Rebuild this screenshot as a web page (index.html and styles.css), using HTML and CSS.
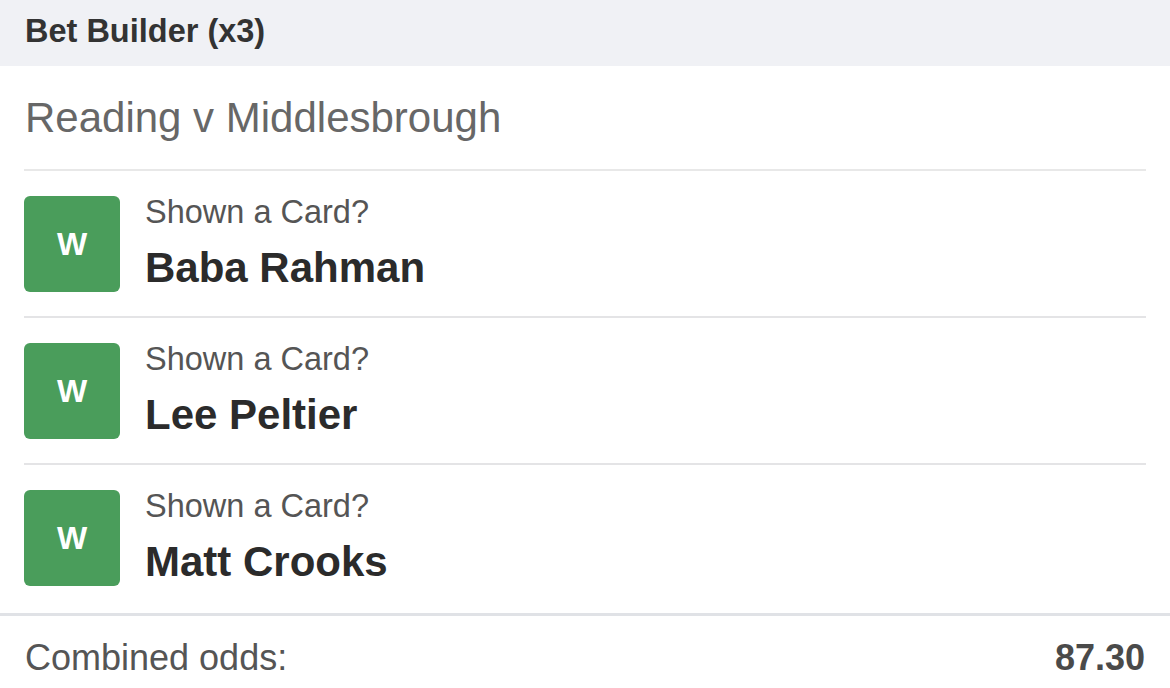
FILE: index.html
```html
<!DOCTYPE html>
<html>
<head>
<meta charset="utf-8">
<link rel="stylesheet" href="styles.css">
</head>
<body>
<div class="slip">
  <div class="header">Bet Builder (x3)</div>
  <div class="body">
    <div class="match">Reading v Middlesbrough</div>
    <div class="sel">
      <div class="badge">W</div>
      <div class="info">
        <div class="market">Shown a Card?</div>
        <div class="name">Baba Rahman</div>
      </div>
    </div>
    <div class="sel">
      <div class="badge">W</div>
      <div class="info">
        <div class="market">Shown a Card?</div>
        <div class="name">Lee Peltier</div>
      </div>
    </div>
    <div class="sel last">
      <div class="badge">W</div>
      <div class="info">
        <div class="market">Shown a Card?</div>
        <div class="name">Matt Crooks</div>
      </div>
    </div>
  </div>
  <div class="footer">
    <span class="label">Combined odds:</span>
    <span class="odds">87.30</span>
  </div>
</div>
</body>
</html>
```
FILE: styles.css
```css
html, body {
  margin: 0;
  padding: 0;
  background: #ffffff;
}
body {
  font-family: "Liberation Sans", Arial, sans-serif;
  width: 1170px;
  height: 688px;
  overflow: hidden;
}
.header {
  height: 66px;
  box-sizing: border-box;
  background: #f0f1f5;
  padding: 12px 25px 0;
  font-size: 32.5px;
  line-height: 38px;
  font-weight: bold;
  color: #333333;
}
.body {
  padding: 0 24px;
}
.match {
  padding: 28px 1px 27px;
  font-size: 42px;
  line-height: 48px;
  color: #676767;
  border-bottom: 2px solid #e8e8e8;
}
.sel {
  display: flex;
  align-items: flex-start;
  gap: 25px;
  padding: 25px 0 24px;
  border-bottom: 2px solid #e4e4e6;
}
.sel.last {
  border-bottom: none;
  padding-bottom: 27px;
}
.badge {
  width: 96px;
  height: 96px;
  flex: none;
  border-radius: 6px;
  background: #4a9d5b;
  color: #ffffff;
  font-weight: bold;
  font-size: 32px;
  display: flex;
  align-items: center;
  justify-content: center;
}
.info {
  display: flex;
  flex-direction: column;
  padding-top: 0;
}
.market {
  font-size: 32.5px;
  line-height: 32px;
  color: #555555;
  margin-bottom: 16px;
}
.name {
  font-size: 42px;
  line-height: 48px;
  font-weight: bold;
  color: #2b2b2b;
}
.footer {
  border-top: 3px solid #e0e2e6;
  display: flex;
  justify-content: space-between;
  padding: 22px 25px 0;
  font-size: 36px;
  line-height: 40px;
  color: #555555;
}
.odds {
  font-weight: bold;
  color: #4a4a4a;
}
```
